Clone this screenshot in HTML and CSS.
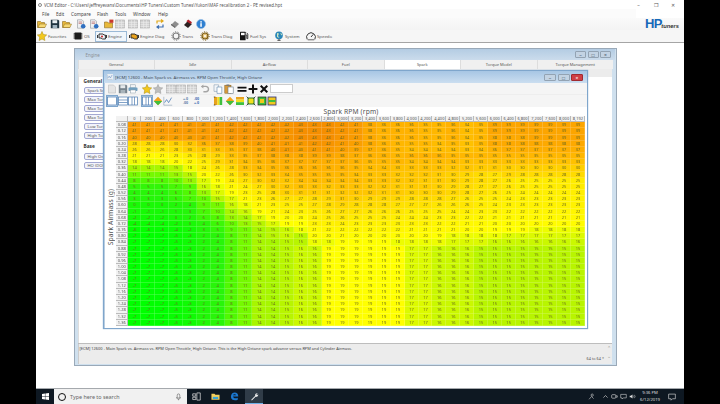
FILE: index.html
```html
<!DOCTYPE html>
<html lang="en">
<head>
<meta charset="utf-8">
<title>VCM Editor</title>
<link rel="stylesheet" href="styles.css">
</head>
<body>
<svg class="defs" width="0" height="0">
  <defs>
    <symbol id="folder" viewBox="0 0 10 10"><path d="M.5 8.5V2.5h3l1 1h3v5z" fill="#e8b83a" stroke="#8a6a20" stroke-width=".6"/><path d="M1 8.5l1.5-3.5h7l-1.5 3.5z" fill="#f6d873" stroke="#8a6a20" stroke-width=".5"/></symbol>
    <symbol id="save" viewBox="0 0 10 10"><path d="M.8.8h7.4l1 1v7.4H.8z" fill="#1f3340"/><rect x="2.4" y="1.2" width="4.8" height="3" fill="#e8eef2"/><rect x="2.6" y="6" width="4.6" height="3" fill="#9fb2bf"/></symbol>
    <symbol id="docblue" viewBox="0 0 10 10"><path d="M1.5.8h4.5l1.5 1.5v6.9H1.5z" fill="#eef0f2" stroke="#8d949a" stroke-width=".6"/><path d="M2.6 3h3.6M2.6 4.4h3.6" stroke="#b05050" stroke-width=".6"/><circle cx="7.2" cy="7.2" r="2.3" fill="#2f6fc0"/></symbol>
    <symbol id="folderred" viewBox="0 0 10 10"><path d="M.5 8.8V3h3l1 1h4v4.8z" fill="#e8b83a" stroke="#8a6a20" stroke-width=".6"/><rect x="5.4" y=".6" width="4" height="3.2" fill="#c9382c"/></symbol>
    <symbol id="grid" viewBox="0 0 10 10"><rect x=".5" y="1" width="9" height="8" fill="#d2d2d2" stroke="#aaa" stroke-width=".6"/><path d="M.5 3.5h9M.5 5.5h9M.5 7.5h9M3.5 1v8M6.5 1v8" stroke="#efefef" stroke-width=".5"/></symbol>
    <symbol id="arrows" viewBox="0 0 10 10"><path d="M2 4.5V2h5.5M6 .5L8 2 6 3.5" fill="none" stroke="#e0a818" stroke-width="1.2"/><path d="M8 5.5V8H2.5M4 6.5L2 8l2 1.5" fill="none" stroke="#3a6db0" stroke-width="1.2"/></symbol>
    <symbol id="diamond" viewBox="0 0 10 10"><path d="M1 6l4-4 4 3-4 4z" fill="#8d8d8d"/><path d="M1 6l4 3V7.5L1 4.8z" fill="#6b6b6b"/></symbol>
    <symbol id="diamondred" viewBox="0 0 10 10"><path d="M1 6l3.6-3.8L9 5 5 9z" fill="#2a2020"/><path d="M3.4 2.2L5.2.6 9 3.2 7.6 4.9z" fill="#b3202a"/></symbol>
    <symbol id="info" viewBox="0 0 10 10"><circle cx="5" cy="5" r="4.5" fill="#2f7fd0" stroke="#8db9e6" stroke-width=".6"/><rect x="4.3" y="4.2" width="1.5" height="3.6" fill="#fff"/><rect x="4.3" y="2.2" width="1.5" height="1.4" fill="#fff"/></symbol>
    <symbol id="star" viewBox="0 0 10 10"><path d="M5 .4l1.4 3.1 3.3.4-2.4 2.3.6 3.3L5 8 2.1 9.5l.6-3.3L.3 3.9l3.3-.4z" fill="#f2c81e" stroke="#a98a12" stroke-width=".5"/></symbol>
    <symbol id="stargrey" viewBox="0 0 10 10"><path d="M5 .4l1.4 3.1 3.3.4-2.4 2.3.6 3.3L5 8 2.1 9.5l.6-3.3L.3 3.9l3.3-.4z" fill="#bdbdbd" stroke="#999" stroke-width=".5"/></symbol>
    <symbol id="chip" viewBox="0 0 10 10"><rect x="1.4" y="1.4" width="7.2" height="7.2" rx=".8" fill="#1c1c1c"/><path d="M.3 3h1.2M.3 5h1.2M.3 7h1.2M8.5 3h1.2M8.5 5h1.2M8.5 7h1.2" stroke="#333" stroke-width=".7"/></symbol>
    <symbol id="engine" viewBox="0 0 10 10"><path d="M2 3h4l1 1h1.4v4H5.6L4 7H2z" fill="none" stroke="#222" stroke-width=".9"/><path d="M.5 4v3M9.5 4v3" stroke="#222" stroke-width=".9"/><circle cx="5" cy="5.4" r="1" fill="#c22"/></symbol>
    <symbol id="enginediag" viewBox="0 0 10 10"><path d="M2 3h4l1 1h1.4v4H5.6L4 7H2z" fill="#e8a21e" stroke="#222" stroke-width=".9"/><path d="M.5 4v3M9.5 4v3" stroke="#222" stroke-width=".9"/></symbol>
    <symbol id="gear" viewBox="0 0 10 10"><circle cx="5" cy="5" r="3" fill="none" stroke="#777" stroke-width="1.2"/><circle cx="5" cy="5" r="4.2" fill="none" stroke="#777" stroke-width="1" stroke-dasharray="1.2 1.4"/></symbol>
    <symbol id="gearbrown" viewBox="0 0 10 10"><circle cx="5" cy="5" r="3" fill="#e2c27a" stroke="#7a5a12" stroke-width="1.2"/><circle cx="5" cy="5" r="4.2" fill="none" stroke="#7a5a12" stroke-width="1" stroke-dasharray="1.2 1.4"/><circle cx="5" cy="5" r="1" fill="#fff"/></symbol>
    <symbol id="fuel" viewBox="0 0 10 10"><rect x="1" y=".8" width="5.6" height="8.4" rx=".5" fill="#151515"/><rect x="2" y="1.8" width="3.6" height="2.4" fill="#fff"/><path d="M6.6 4h1.2v3.6h1V3L7.6 1.8" fill="none" stroke="#151515" stroke-width=".8"/></symbol>
    <symbol id="globe" viewBox="0 0 10 10"><circle cx="5" cy="4.4" r="3.8" fill="#2a86b8"/><path d="M3 2l2 .6L4 5l1.6 2L3 6zM6.2 1.6l2 1.6-1 1.4z" fill="#cfe6c0"/><path d="M3.4 9.3h3.2M5 8.2v1.1" stroke="#222" stroke-width=".8"/></symbol>
    <symbol id="speedo" viewBox="0 0 10 10"><path d="M1.2 8.4A4.4 4.4 0 1 1 8.8 8.4" fill="none" stroke="#222" stroke-width=".9"/><path d="M1.8 8.8h6.4" stroke="#222" stroke-width=".7"/><path d="M5 6l2.2-2.6" stroke="#222" stroke-width=".9"/></symbol>
    <symbol id="docgrey" viewBox="0 0 10 10"><path d="M1.5 1h5L8.5 3v6h-7z" fill="#e4e4e4" stroke="#bdbdbd" stroke-width=".6"/></symbol>
    <symbol id="savegrey" viewBox="0 0 10 10"><path d="M.8.8h7.4l1 1v7.4H.8z" fill="#77838c"/><rect x="2.4" y="1.2" width="4.8" height="3" fill="#e4e8ea"/><rect x="2.6" y="6" width="4.6" height="3" fill="#a8b3ba"/></symbol>
    <symbol id="printer" viewBox="0 0 10 10"><rect x="2.4" y=".8" width="5.2" height="3" fill="#f2f4f5" stroke="#8a9aa5" stroke-width=".5"/><rect x=".5" y="3.4" width="9" height="3.6" rx=".7" fill="#6f9fc0"/><rect x="2.4" y="6" width="5.2" height="3" fill="#fff" stroke="#8a9aa5" stroke-width=".5"/></symbol>
    <symbol id="undo" viewBox="0 0 10 10"><path d="M2.6 2.4h3.2a2.6 2.6 0 0 1 0 5.4H3.4" fill="none" stroke="#a5a5a5" stroke-width="1.4"/><path d="M3.4.4v4L.8 2.4z" fill="#a5a5a5"/></symbol>
    <symbol id="copy" viewBox="0 0 10 10"><path d="M1 .8h4.6v6.6H1z" fill="#f3f6f9" stroke="#8aa0b4" stroke-width=".6"/><path d="M4 3h4.8v6.4H4z" fill="#fff" stroke="#5e86ad" stroke-width=".6"/></symbol>
    <symbol id="paste" viewBox="0 0 10 10"><rect x=".8" y="1.2" width="6.2" height="8" fill="#d89a3a" stroke="#7d5a1e" stroke-width=".5"/><rect x="4" y="3" width="5.2" height="6.4" fill="#fff" stroke="#6b7a88" stroke-width=".6"/><rect x="2.4" y=".5" width="3" height="1.4" fill="#777"/></symbol>
    <symbol id="equal" viewBox="0 0 10 10"><path d="M.5 2.8h9v1.8h-9zM.5 6h9v1.8h-9z" fill="#111"/></symbol>
    <symbol id="plus" viewBox="0 0 10 10"><path d="M4 .6h2V4h3.4v2H6v3.4H4V6H.6V4H4z" fill="#111"/></symbol>
    <symbol id="times" viewBox="0 0 10 10"><path d="M1 2.4L2.4 1 5 3.6 7.6 1 9 2.4 6.4 5 9 7.6 7.6 9 5 6.4 2.4 9 1 7.6 3.6 5z" fill="#111"/></symbol>
    <symbol id="winplain" viewBox="0 0 10 10"><rect x=".6" y="1" width="8.8" height="8" fill="#fff" stroke="#4a7ab0" stroke-width=".7"/></symbol>
    <symbol id="winrows" viewBox="0 0 10 10"><rect x=".6" y="1" width="8.8" height="8" fill="#fff" stroke="#4a7ab0" stroke-width=".7"/><path d="M.6 4h8.8M.6 6.5h8.8" stroke="#4a7ab0" stroke-width=".7"/></symbol>
    <symbol id="wincols" viewBox="0 0 10 10"><rect x=".6" y="1" width="8.8" height="8" fill="#fff" stroke="#4a7ab0" stroke-width=".7"/><path d="M4 1v8M6.5 1v8" stroke="#4a7ab0" stroke-width=".7"/></symbol>
    <symbol id="heat" viewBox="0 0 10 10"><path d="M.8 5L5 .8 9.2 5 5 9.2z" fill="#f2a21e"/><path d="M.8 5h8.4L5 9.2z" fill="#3fbf3f"/></symbol>
    <symbol id="chart" viewBox="0 0 10 10"><path d="M.8.8v8.4h8.4" fill="none" stroke="#8aa0b4" stroke-width=".6"/><path d="M1.6 6.6l2-3 2 3 3-5" fill="none" stroke="#3a6db0" stroke-width=".7"/></symbol>
    <symbol id="swatch" viewBox="0 0 10 10"><rect x="1" y="1" width="3.4" height="8" fill="#e8a21e"/><rect x="4.4" y="1" width="2.2" height="8" fill="#f2e01e"/><rect x="6.6" y="1" width="2.6" height="8" fill="#3fbf3f"/><path d="M.8 1h1.6M.8 9h1.6" stroke="#222" stroke-width=".7"/></symbol>
    <symbol id="swatchv" viewBox="0 0 10 10"><rect x="1" y="1" width="8" height="2.6" fill="#e8a21e"/><rect x="1" y="3.6" width="8" height="2.6" fill="#f2e01e"/><rect x="1" y="6.2" width="8" height="2.8" fill="#3fbf3f"/></symbol>
    <symbol id="frame" viewBox="0 0 10 10"><rect x="2" y="2" width="6" height="6" fill="#f2e01e" stroke="#2a7a2a" stroke-width="1"/><path d="M.6.6L2.5 2.5M9.4.6L7.5 2.5M.6 9.4l1.9-1.9M9.4 9.4L7.5 7.5" stroke="#222" stroke-width=".8"/></symbol>
    <symbol id="box" viewBox="0 0 10 10"><rect x="1" y="1" width="8" height="8" fill="#3fbf3f" stroke="#222" stroke-width=".7"/><rect x="3" y="3" width="4" height="4" fill="#f2c81e"/></symbol>
    <symbol id="boxv" viewBox="0 0 10 10"><rect x="1" y="1" width="8" height="8" fill="#f2c81e" stroke="#2a2a7a" stroke-width=".8"/><rect x="1.6" y="4" width="6.8" height="2" fill="#3fbf3f"/></symbol>
    <symbol id="wrench" viewBox="0 0 10 10"><path d="M1.4 8.6l4.4-4.4a2.2 2.2 0 0 1 2.8-2.8L7.2 2.8l.6.8L9 2.4a2.2 2.2 0 0 1-2.8 2.8L2 9.4z" fill="#f2f2f2"/></symbol>
  </defs>
</svg>
<div class="screen">
  <main class="app">
    <header class="titlebar">
      <span class="title-icon"></span>
      <span class="title-text">VCM Editor - C:\Users\jeffreyevans\Documents\HP Tuners\Custom Tunes\Yukon\MAF recalibration 2 - PE revised.hpt</span>
      <span class="win-ctrls"><span>&#8211;</span><span>&#10064;</span><span>&#10005;</span></span>
    </header>
    <nav class="menubar">
      <span class="m-file">File</span><span class="m-edit">Edit</span><span class="m-compare">Compare</span><span class="m-flash">Flash</span><span class="m-tools">Tools</span><span class="m-window">Window</span><span>Help</span>
    </nav>
    <div class="toolbar-wrap">
      <div class="tools-a">
        <svg class="ico"><use href="#folder"/></svg>
        <svg class="ico"><use href="#save"/></svg>
        <svg class="ico"><use href="#folder"/></svg>
        <svg class="ico"><use href="#docblue"/></svg>
        <svg class="ico"><use href="#docblue"/></svg>
        <svg class="ico"><use href="#folderred"/></svg>
        <svg class="ico"><use href="#grid"/></svg>
        <svg class="ico"><use href="#grid"/></svg>
        <svg class="ico"><use href="#grid"/></svg>
        <svg class="ico"><use href="#arrows"/></svg>
        <svg class="ico"><use href="#diamond"/></svg>
        <svg class="ico"><use href="#diamondred"/></svg>
        <svg class="ico"><use href="#info"/></svg>
      </div>
      <div class="brand"><span class="brand-hp">HP</span><span class="brand-t">tuners</span></div>
    </div>
    <div class="tools-b">
      <span class="tb"><svg class="ico"><use href="#star"/></svg>Favorites</span>
      <span class="tb"><svg class="ico"><use href="#chip"/></svg>OS</span>
      <span class="tb tb-on"><svg class="ico"><use href="#engine"/></svg>Engine</span>
      <span class="tb"><svg class="ico"><use href="#enginediag"/></svg>Engine Diag</span>
      <span class="tb"><svg class="ico"><use href="#gear"/></svg>Trans</span>
      <span class="tb"><svg class="ico"><use href="#gearbrown"/></svg>Trans Diag</span>
      <span class="tb"><svg class="ico"><use href="#fuel"/></svg>Fuel Sys</span>
      <span class="tb"><svg class="ico"><use href="#globe"/></svg>System</span>
      <span class="tb"><svg class="ico"><use href="#speedo"/></svg>Speedo</span>
    </div>
    <section class="workspace">
      <article class="engine">
        <div class="engine-title">
          <span class="engine-name">Engine</span>
          <span class="wbtns"><i>&#8211;</i><i>&#9633;</i><i>&#215;</i></span>
        </div>
        <div class="tabs">
          <span>General</span><span>Idle</span><span>Airflow</span><span>Fuel</span><span class="tab-on">Spark</span><span>Torque Model</span><span>Torque Management</span>
        </div>
        <div class="engine-body">
          <div class="side">
            <b>General</b>
            <span class="sbtn">Spark Smooth</span>
            <span class="sbtn">Max Torque</span>
            <span class="sbtn">Max Torque</span>
            <span class="sbtn">Max Torque</span>
            <span class="sbtn">Low Torque</span>
            <span class="sbtn">High Torque</span>
            <b class="side-b">Base</b>
            <span class="sbtn">High Octane</span>
            <span class="sbtn">HO (DOD)</span>
          </div>
        </div>
        <div class="status">
          <p class="status-text">[ECM] 12600 - Main Spark vs. Airmass vs. RPM Open Throttle, High Octane. This is the High Octane spark advance versus RPM and Cylinder Airmass.</p>
          <div class="status-side"><span class="arrow">&#8963;</span><span class="status-count">64 to 64 *<span class="arrow arrow-d">&#8964;</span></span></div>
        </div>
      </article>
      <article class="table-win">
        <div class="tw-title">
          <svg class="ico tw-ico"><use href="#chart"/></svg>
          <span class="tw-name">[ECM] 12600 - Main Spark vs. Airmass vs. RPM Open Throttle, High Octane</span>
          <span class="tw-btns"><i>&#8211;</i><i>&#9633;</i><i class="close">&#215;</i></span>
        </div>
        <div class="tw-row1">
          <svg class="ico"><use href="#docgrey"/></svg>
          <svg class="ico"><use href="#savegrey"/></svg>
          <svg class="ico"><use href="#printer"/></svg>
          <svg class="ico"><use href="#star"/></svg>
          <svg class="ico"><use href="#stargrey"/></svg>
          <svg class="ico"><use href="#grid"/></svg>
          <svg class="ico"><use href="#grid"/></svg>
          <svg class="ico"><use href="#grid"/></svg>
          <svg class="ico"><use href="#undo"/></svg>
          <svg class="ico"><use href="#copy"/></svg>
          <svg class="ico"><use href="#paste"/></svg>
          <svg class="ico"><use href="#equal"/></svg>
          <svg class="ico"><use href="#plus"/></svg>
          <svg class="ico"><use href="#times"/></svg>
          <span class="valbox"></span>
        </div>
        <div class="tw-row2">
          <svg class="ico sel"><use href="#winplain"/></svg>
          <svg class="ico"><use href="#winrows"/></svg>
          <svg class="ico"><use href="#wincols"/></svg>
          <svg class="ico sel"><use href="#wincols"/></svg>
          <svg class="ico"><use href="#heat"/></svg>
          <svg class="ico"><use href="#chart"/></svg>
          <span class="mini">+.0<br>.00</span>
          <span class="mini mini-b">.00<br>+.0</span>
          <svg class="ico"><use href="#swatch"/></svg>
          <svg class="ico"><use href="#heat"/></svg>
          <svg class="ico"><use href="#swatchv"/></svg>
          <svg class="ico"><use href="#frame"/></svg>
          <svg class="ico"><use href="#box"/></svg>
          <svg class="ico"><use href="#boxv"/></svg>
        </div>
        <div class="tw-content">
          <div class="x-label">Spark RPM (rpm)</div>
          <div class="plot">
            <div class="y-label">Spark Airmass (g)</div>
            <div class="sheet" id="sheet"></div>
          </div>
        </div>
      </article>
    </section>
    <footer class="taskbar">
      <span class="start"><svg class="win-logo" viewBox="0 0 10 10"><path d="M0 1.4L4.2.8v3.9H0zM4.8.7L10 0v4.7H4.8zM0 5.3h4.2v3.9L0 8.6zM4.8 5.3H10V10l-5.2-.7z" fill="#fff"/></svg></span>
      <span class="search"><span class="cortana"></span><span class="search-text">Type here to search</span>
        <svg class="mic" viewBox="0 0 10 10"><rect x="3.2" y=".6" width="3.6" height="5.8" rx="1.8" fill="none" stroke="#555" stroke-width=".8"/><path d="M2 5a3 3 0 0 0 6 0M5 8v1.6" fill="none" stroke="#555" stroke-width=".8"/></svg>
      </span>
      <span class="tasks">
        <svg class="tk" viewBox="0 0 10 10"><path d="M.8 2h3.4v2.6H.8zM.8 5.8h3.4v2.6H.8zM5.4 1h3.8v8H5.4z" fill="none" stroke="#ddd" stroke-width=".8"/></svg>
        <svg class="tk" viewBox="0 0 10 10"><path d="M.5 2h3.4l1 1h4.6v5.6H.5z" fill="#f5cf5a"/><rect x="2" y="5.4" width="6" height="2.4" fill="#3aa6d8"/></svg>
        <svg class="tk" viewBox="0 0 10 10"><path d="M1 5.2C1 2.4 3 .6 5.4.6c2.2 0 3.8 1.6 3.8 4.4H3.4c.2 2 2.8 2.6 5.2 1.3v2.3C5 10 1 8.8 1 5.2zM3.4 3.6h3.2C6.5 2 3.8 2 3.4 3.6z" fill="#1b78d0"/></svg>
        <span class="tk-on"><svg class="tk"><use href="#wrench"/></svg></span>
      </span>
      <span class="tray">
        <svg class="tr" viewBox="0 0 10 10"><circle cx="6" cy="3" r="1.6" fill="none" stroke="#ddd" stroke-width=".8"/><path d="M1.5 9L5 5l3 3" fill="none" stroke="#ddd" stroke-width=".8"/></svg>
        <svg class="tr" viewBox="0 0 10 10"><path d="M2 6.6L5 3.6l3 3" fill="none" stroke="#ddd" stroke-width=".9"/></svg>
        <svg class="tr" viewBox="0 0 10 10"><rect x="1" y="2.4" width="5.8" height="5" rx="1" fill="none" stroke="#ddd" stroke-width=".9"/><path d="M7 4h2v2H7" fill="none" stroke="#ddd" stroke-width=".8"/></svg>
        <svg class="tr" viewBox="0 0 10 10"><path d="M1 2h8v5H4.6L3 8.6V7H1z" fill="none" stroke="#ddd" stroke-width=".8"/></svg>
        <svg class="tr" viewBox="0 0 10 10"><path d="M1 4h1.6L5 2v6L2.6 6H1z" fill="#ddd"/><path d="M6.2 3.6a2 2 0 0 1 0 2.8M7.6 2.6a3.4 3.4 0 0 1 0 4.8" fill="none" stroke="#ddd" stroke-width=".7"/></svg>
        <span class="clock">9:36 PM<br>6/12/2019</span>
        <svg class="notif" viewBox="0 0 10 10"><path d="M.8 1.4h8.4v5.8H5.6L3.8 9V7.2h-3z" fill="none" stroke="#ddd" stroke-width=".8"/></svg>
      </span>
    </footer>
  </main>
</div>
<script src="script.js"></script>
</body>
</html>
```
FILE: styles.css
```css
* { box-sizing: border-box; }
html, body { margin: 0; padding: 0; height: 100%; background: #000; overflow: hidden; }
body { font-family: "Noto Sans", "Liberation Sans", sans-serif; color: #444; }
.defs { position: absolute; }
.screen { width: 720px; height: 404px; display: flex; justify-content: center; background: #000; }
.app { width: 648px; height: 404px; display: flex; flex-direction: column; background: #fff; }
.ico { display: block; width: 10px; height: 10px; }

.titlebar { height: 9px; display: flex; align-items: center; padding-left: 2px; background: #fff; flex: none; }
.title-icon { width: 4px; height: 4px; border: 1px solid #888; border-radius: 50%; margin-right: 2px; }
.title-text { font-size: 4.4px; color: #555; white-space: nowrap; }
.win-ctrls { margin-left: auto; display: flex; gap: 8px; padding-right: 7px; font-size: 5px; color: #555; }
.win-ctrls span { width: 9px; text-align: center; }
.menubar { height: 9px; display: flex; align-items: center; padding-left: 6px; font-size: 4.6px; color: #444; background: #fbfbfb; width: 600px; flex: none; }
.m-file { width: 14px; } .m-edit { width: 15px; } .m-compare { width: 26px; } .m-flash { width: 18px; } .m-tools { width: 18px; } .m-window { width: 25px; }
.menubar span { white-space: nowrap; }
.toolbar-wrap { height: 12px; display: flex; flex: none; background: linear-gradient(#fafafa, #f4f4f4); }
.tools-a { display: grid; grid-template-columns: 13px 12px 14px 13px 15px 11px 13px 12px 15px 15px 13px 13px 11px; align-items: center; padding-left: 1px; }
.brand { margin-left: auto; margin-right: 5px; display: flex; align-items: flex-end; height: 12px; }
.brand-hp { font: bold 13px/12px "Liberation Sans", sans-serif; color: #1668b8; letter-spacing: -.6px; }
.brand-t { font: italic bold 5.8px/8px "Liberation Sans", sans-serif; color: #333; margin-left: -.5px; }
.tools-b { height: 13px; flex: none; display: grid; grid-template-columns: 36px 23px 33px 42px 29px 39px 35px 32px 32px; align-items: center; background: #f6f6f6; border-bottom: 1px solid #a5a5a5; }
.tb { display: flex; align-items: center; gap: 1px; font-size: 4.3px; color: #555; white-space: nowrap; padding-left: 1px; height: 11px; }
.tb-on { border: 1px solid #9ab9d6; background: #f0f6fb; margin-right: 1px; }

.workspace { flex: 1; position: relative; background: #fff; overflow: hidden; min-height: 0; }

.engine { position: absolute; left: 37.5px; top: 5px; width: 543.5px; height: 318px; display: flex; flex-direction: column; background: #cfe0ee; border: 1px solid #9aa9b8; padding: 0 4px 1px 3px; }
.engine-title { height: 11px; display: flex; align-items: center; flex: none; background: linear-gradient(#b4cce3, #cbdcec); margin: 0 -3px; padding: 0 4px 0 11px; }
.engine-name { font-size: 4.4px; color: #8a8f95; }
.wbtns { margin-left: auto; display: flex; gap: 1.5px; }
.wbtns i, .tw-btns i { display: block; width: 11px; height: 6.5px; font-style: normal; text-align: center; font-size: 5px; line-height: 6px; background: #c3d3e3; border: 1px solid #93a3b3; color: #456; border-radius: 1px; }
.tabs { display: grid; grid-template-columns: repeat(7, 76.5px); height: 9px; flex: none; background: #eaeaea; }
.tabs span { font-size: 4px; line-height: 9px; text-align: center; color: #555; border-left: 1px solid #ddd; background: #f0f0f0; }
.tabs .tab-on { background: #fff; }
.engine-body { flex: 1; min-height: 0; background: #fff; border-top: 8px solid #ececec; border-left: 1px solid #ddd; padding: 1px 0 0 5px; }
.side { display: flex; flex-direction: column; align-items: stretch; width: 60px; }
.side b { font-size: 4.8px; line-height: 7px; color: #333; }
.side-b { margin-top: 4px; margin-bottom: 1px; }
.sbtn { display: block; height: 7.5px; margin-top: 1.5px; font-size: 4.2px; line-height: 5.5px; padding-left: 3px; color: #555; border: 1px solid #a3a8d2; border-radius: 2px; background: #f2f3fb; white-space: nowrap; }
.status { height: 21px; flex: none; display: flex; background: #ececec; border-top: 1px solid #bdbdbd; }
.status-text { margin: 0; padding: 2px 0 0 1px; flex: 1; font-size: 3.95px; line-height: 6px; color: #444; white-space: nowrap; border-left: 1px solid #ccc; }
.status-side { width: 34px; display: flex; flex-direction: column; align-items: flex-end; font-size: 3.8px; color: #555; }
.arrow { display: block; width: 6px; text-align: center; font-size: 5px; line-height: 9px; height: 10px; color: #999; }
.status-count { display: flex; align-items: center; gap: 2px; white-space: nowrap; }
.arrow-d { height: 8px; line-height: 5px; }

.table-win { position: absolute; left: 67px; top: 27px; width: 485px; height: 259px; display: flex; flex-direction: column; background: #b9cde0; border: 1px solid #7fa6cc; box-shadow: 0 0 1px #7fa6cc; }
.tw-title { height: 12px; flex: none; display: flex; align-items: center; padding: 0 4px 0 2px; background: linear-gradient(#a7c6e4, #cbdef0); }
.tw-ico { width: 6px; height: 6px; background: #e8eef4; margin-right: 2px; margin-left: 1px; }
.tw-name { font-size: 4.25px; color: #3d4a58; white-space: nowrap; }
.tw-btns { margin-left: auto; display: flex; gap: 1.5px; }
.tw-btns i { width: 12px; height: 7px; }
.tw-btns .close { background: #cf3f45; color: #fff; border-color: #a02a30; }
.tw-row1, .tw-row2 { flex: none; display: grid; align-items: center; padding-left: 2px; margin-left: 1px; background: #f5f5f5; }
.tw-row1 { height: 12px; grid-template-columns: 11px 10px 14px 11px 13px 10px 11px 13px 13px 11px 13px 11px 11px 11px 24px; border-bottom: 1px solid #eee; }
.tw-row2 { height: 12px; grid-template-columns: 11px 10px 14px 11px 10px 20px 11px 19px 12px 10px 11px 11px 10px 10px; }
.valbox { display: block; width: 23px; height: 9px; background: #fff; border: 1px solid #ccc; }
.sel { background: #c8dcf0; outline: 1px solid #7fa6cc; }
.mini { font-size: 3.6px; line-height: 4px; color: #5a7fa5; font-weight: bold; }
.mini-b { color: #3a6db0; }
.tw-content { flex: 1; min-height: 0; background: #fff; margin-left: 1px; display: flex; flex-direction: column; }
.x-label { height: 9px; flex: none; text-align: center; font-size: 6.7px; line-height: 9px; color: #555; padding-left: 10px; letter-spacing: .15px; }
.plot { display: flex; height: 210.2px; flex: none; }
.y-label { width: 11px; flex: none; writing-mode: vertical-rl; transform: rotate(180deg); text-align: center; font-size: 6.7px; line-height: 11px; color: #555; padding-top: 8px; letter-spacing: .1px; }
.sheet { display: grid; grid-template-columns: 11.5px repeat(33, 13.87px); grid-auto-rows: 6.18px; filter: blur(.25px); }
.sheet div { font-size: 4px; line-height: 6.18px; text-align: center; overflow: hidden; white-space: nowrap; }
.sheet .h { background: #f2f2f2; color: #555; box-shadow: inset -1px -1px 0 #bbb; }
.sheet .c { color: #6a6a1e; box-shadow: inset -.5px -.5px 0 rgba(255,255,255,.35); }

.taskbar { height: 16px; flex: none; display: flex; align-items: center; background: #0e1822; border-top: 1px solid #a5a9ad; }
.start { width: 18px; height: 15px; display: flex; align-items: center; justify-content: center; flex: none; }
.win-logo { width: 7px; height: 7px; }
.search { width: 133px; height: 15px; flex: none; display: flex; align-items: center; background: #f1f1f1; padding-left: 4px; }
.cortana { width: 8px; height: 8px; border: 1.2px solid #111; border-radius: 50%; margin-right: 4px; }
.search-text { font-size: 5.4px; color: #666; }
.mic { width: 7px; height: 8px; margin-left: auto; margin-right: 5px; }
.tasks { display: flex; align-items: center; height: 15px; padding-left: 5px; gap: 10px; }
.tk { display: block; width: 9px; height: 9px; }
.tk-on { width: 18px; height: 15px; background: #303c48; border-bottom: 1px solid #6fb1e8; display: flex; align-items: center; justify-content: center; margin-left: -4px; }
.tray { margin-left: auto; display: flex; align-items: center; height: 15px; gap: 2px; padding-right: 8px; }
.tr { display: block; width: 7px; height: 7px; }
.tray .tr:first-child { margin-right: 5px; }
.clock { font-size: 4.2px; line-height: 6.5px; color: #ddd; text-align: center; margin-left: 2px; white-space: nowrap; }
.notif { width: 8px; height: 8px; margin-left: 6px; }
```
FILE: script.js
```js
var cols = ["0","200","400","600","800","1,000","1,200","1,400","1,600","1,800","2,000","2,200","2,400","2,600","2,800","3,000","3,200","3,400","3,600","3,800","4,000","4,200","4,400","4,800","5,200","5,600","6,000","6,400","6,800","7,200","7,600","8,000","8,192"];
var low = "-7 -7 -7 -5 -3 2 4 8 11 14 14 15";
var hi = "16 16 19 19 19 19 19 19 17 17 16 16 16 15 15 15 15 15 15 15 15";
var rows = [
"41 41 41 41 41 41 41 42 42 42 42 42 43 43 43 42 41 38 36 36 36 35 35 36 34 35 39 39 39 39 39 39 39",
"41 41 41 41 41 41 41 42 42 42 42 42 43 43 43 42 41 38 36 36 36 35 35 36 34 35 39 39 39 39 39 39 39",
"40 40 40 40 40 41 41 42 42 42 42 42 43 43 43 42 41 38 36 36 36 35 35 36 34 35 38 38 38 39 39 39 39",
"28 28 28 30 32 36 37 38 39 40 41 41 41 42 42 41 40 38 36 35 35 35 34 35 33 35 38 38 38 38 38 38 38",
"26 26 26 28 30 31 33 35 37 38 40 41 40 41 41 40 39 37 36 35 34 34 34 34 33 34 36 37 37 37 37 37 37",
"21 21 21 23 25 28 29 33 35 37 38 38 38 39 39 38 37 36 36 35 36 36 36 35 35 35 35 35 35 35 35 35 35",
"18 18 18 20 22 25 29 31 34 35 36 37 37 37 37 37 36 35 35 35 34 34 34 34 33 33 33 33 33 33 33 33 33",
"14 14 14 15 18 24 26 28 33 34 35 36 36 36 36 36 35 34 34 33 33 33 33 32 32 31 31 30 30 30 30 30 30",
"11 11 11 13 15 20 22 26 30 32 33 34 35 35 35 35 34 33 33 32 32 32 31 30 29 28 27 29 28 28 28 28 28",
"8 8 8 10 13 17 19 24 27 30 32 32 34 34 34 34 34 33 33 32 32 31 31 30 29 28 27 26 25 25 25 25 25",
"5 5 5 7 9 16 18 21 24 27 30 32 33 33 32 33 33 32 32 31 31 31 30 29 28 27 27 26 25 25 25 25 25",
"4 4 4 6 8 13 17 19 23 25 28 30 31 31 31 32 32 32 31 31 30 30 30 29 28 27 26 25 24 24 24 24 24",
"3 3 3 5 7 10 15 17 21 23 26 27 27 28 29 31 30 29 29 29 28 28 28 27 26 25 25 24 23 23 23 23 23",
"0 0 0 2 4 9 11 16 18 21 23 25 25 27 28 29 28 28 28 27 27 27 26 26 26 25 24 23 23 23 23 23 23",
"-1 -1 -1 1 3 7 10 14 16 19 21 24 23 25 26 27 27 26 26 26 25 25 25 24 24 23 23 22 22 22 22 22 22",
"-2 -2 -2 0 2 6 8 13 14 17 19 20 20 24 25 26 25 25 25 24 24 24 23 23 22 22 21 21 21 21 21 21 21",
"-4 -4 -4 -2 0 4 6 10 13 15 17 19 19 23 23 24 23 23 23 23 23 23 22 22 21 21 20 20 20 20 20 20 20",
"-6 -6 -6 -4 -2 3 5 9 11 14 15 16 18 21 22 22 22 22 22 22 21 21 21 21 20 20 19 19 19 18 18 18 18",
"-7 -7 -7 -5 -3 2 4 8 11 14 15 16 15 20 20 21 20 20 20 20 20 20 19 18 18 18 18 17 17 17 17 17 17",
"-7 -7 -7 -5 -3 2 4 8 11 14 14 15 15 18 18 19 19 19 19 18 18 18 18 17 17 17 16 16 16 16 16 16 16"
];
while (rows.length < 33) rows.push(low + " " + hi);

var stops = [[-7,[0,255,0]],[4,[40,245,10]],[10,[100,250,0]],[15,[184,245,0]],[19,[255,255,0]],[25,[255,236,0]],[30,[255,208,0]],[36,[255,178,0]],[39,[252,165,0]],[43,[245,142,0]]];
function color(v) {
  for (var i = 1; i < stops.length; i++) {
    if (v <= stops[i][0]) {
      var a = stops[i - 1], b = stops[i], t = (v - a[0]) / (b[0] - a[0]);
      return "rgb(" + a[1].map(function (x, k) { return Math.round(x + (b[1][k] - x) * t); }).join(",") + ")";
    }
  }
  return "rgb(245,142,0)";
}
function cell(text, cls, bg) {
  var d = document.createElement("div");
  d.textContent = text;
  d.className = cls;
  if (bg) d.style.background = bg;
  return d;
}
var sheet = document.getElementById("sheet");
sheet.appendChild(cell("", "h"));
cols.forEach(function (c) { sheet.appendChild(cell(c, "h")); });
rows.forEach(function (r, i) {
  sheet.appendChild(cell((0.08 + i * 0.04).toFixed(2), "h"));
  r.split(" ").forEach(function (v) { sheet.appendChild(cell(v, "c", color(+v))); });
});
```
